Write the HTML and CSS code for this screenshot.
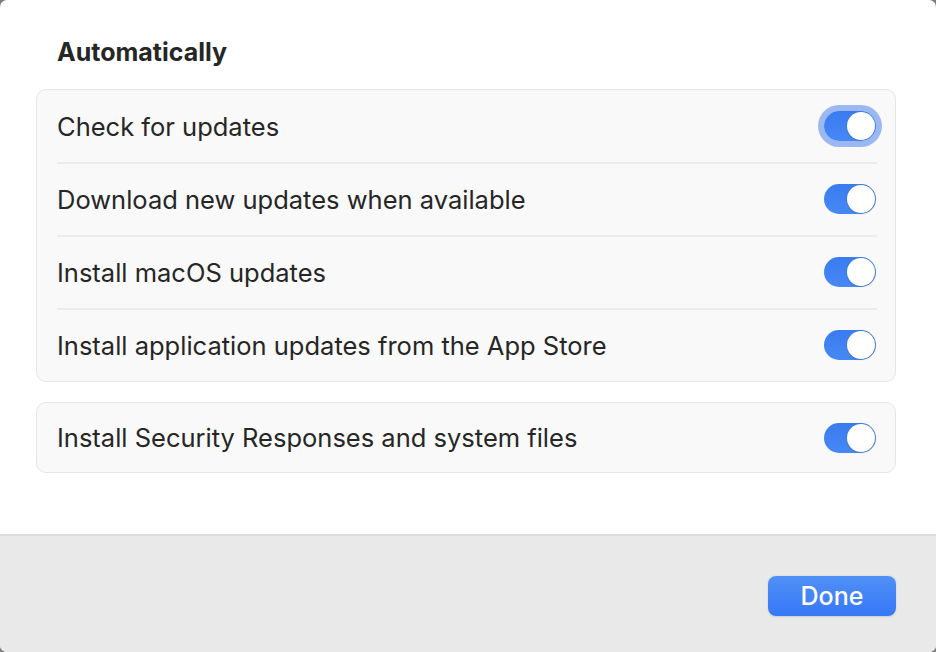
FILE: index.html
```html
<!DOCTYPE html>
<html>
<head>
<meta charset="utf-8">
<link rel="stylesheet" href="styles.css">
</head>
<body>
<div class="window">
  <div class="content">
    <h2 class="heading">Automatically</h2>
    <div class="card">
      <div class="row">
        <span class="label">Check for updates</span>
        <span class="toggle focused"><span class="knob"></span></span>
      </div>
      <div class="row">
        <span class="label">Download new updates when available</span>
        <span class="toggle"><span class="knob"></span></span>
      </div>
      <div class="row">
        <span class="label">Install macOS updates</span>
        <span class="toggle"><span class="knob"></span></span>
      </div>
      <div class="row">
        <span class="label">Install application updates from the App Store</span>
        <span class="toggle"><span class="knob"></span></span>
      </div>
    </div>
    <div class="card single">
      <div class="row">
        <span class="label">Install Security Responses and system files</span>
        <span class="toggle"><span class="knob"></span></span>
      </div>
    </div>
  </div>
  <div class="footer">
    <button class="done">Done</button>
  </div>
</div>
</body>
</html>
```
FILE: styles.css
```css
html, body {
  margin: 0;
  padding: 0;
  background: #7c7c7c;
}
body {
  font-family: Inter, "Noto Sans", "Liberation Sans", sans-serif;
  color: #262626;
}
.window {
  width: 936px;
  height: 652px;
  background: #ffffff;
  border-radius: 7px;
  overflow: hidden;
  display: flex;
  flex-direction: column;
}
.content {
  flex: 1;
  padding: 37px 40px 0 36px;
}
.heading {
  margin: 0 0 22px 21px;
  font-size: 25px;
  line-height: 30px;
  font-weight: 700;
  color: #262626;
}
.card {
  background: #f9f9f9;
  border: 1px solid #e6e6e6;
  border-radius: 10px;
}
.card.single {
  margin-top: 20px;
}
.card.single .row {
  height: 69px;
}
.row {
  height: 72px;
  display: flex;
  align-items: center;
  justify-content: space-between;
  padding: 0 19px 0 20px;
  position: relative;
}
.row + .row {
  border-top: 1px solid transparent;
}
.row + .row::before {
  content: "";
  position: absolute;
  top: -1px;
  left: 20px;
  right: 18px;
  height: 2px;
  background: #ececec;
}
.label {
  font-size: 25.5px;
  color: #262626;
}
.toggle {
  width: 52px;
  height: 30px;
  border-radius: 15px;
  background: linear-gradient(180deg, #3a7cf0 0%, #4688f4 100%);
  display: flex;
  align-items: center;
  justify-content: flex-end;
  padding: 0 1px;
  box-sizing: border-box;
}
.toggle.focused {
  box-shadow: 0 0 0 6px rgba(64, 120, 235, 0.5);
}
.knob {
  width: 28px;
  height: 28px;
  border-radius: 50%;
  background: #ffffff;
  box-shadow: 0 0.5px 1.5px rgba(0, 0, 0, 0.25);
}
.footer {
  height: 118px;
  border-top: 2px solid #dddddd;
  background: #e9e9e9;
  display: flex;
  justify-content: flex-end;
  align-items: flex-start;
  padding: 40px 40px 0 0;
  box-sizing: border-box;
}
.done {
  width: 128px;
  height: 40px;
  border: none;
  border-radius: 8px;
  background: linear-gradient(180deg, #5090f7 0%, #3678f6 100%);
  box-shadow: 0 0.5px 2px rgba(0, 0, 0, 0.12);
  color: #ffffff;
  font-family: Inter, "Noto Sans", "Liberation Sans", sans-serif;
  font-size: 25px;
  font-weight: 500;
  padding: 0;
}
```
